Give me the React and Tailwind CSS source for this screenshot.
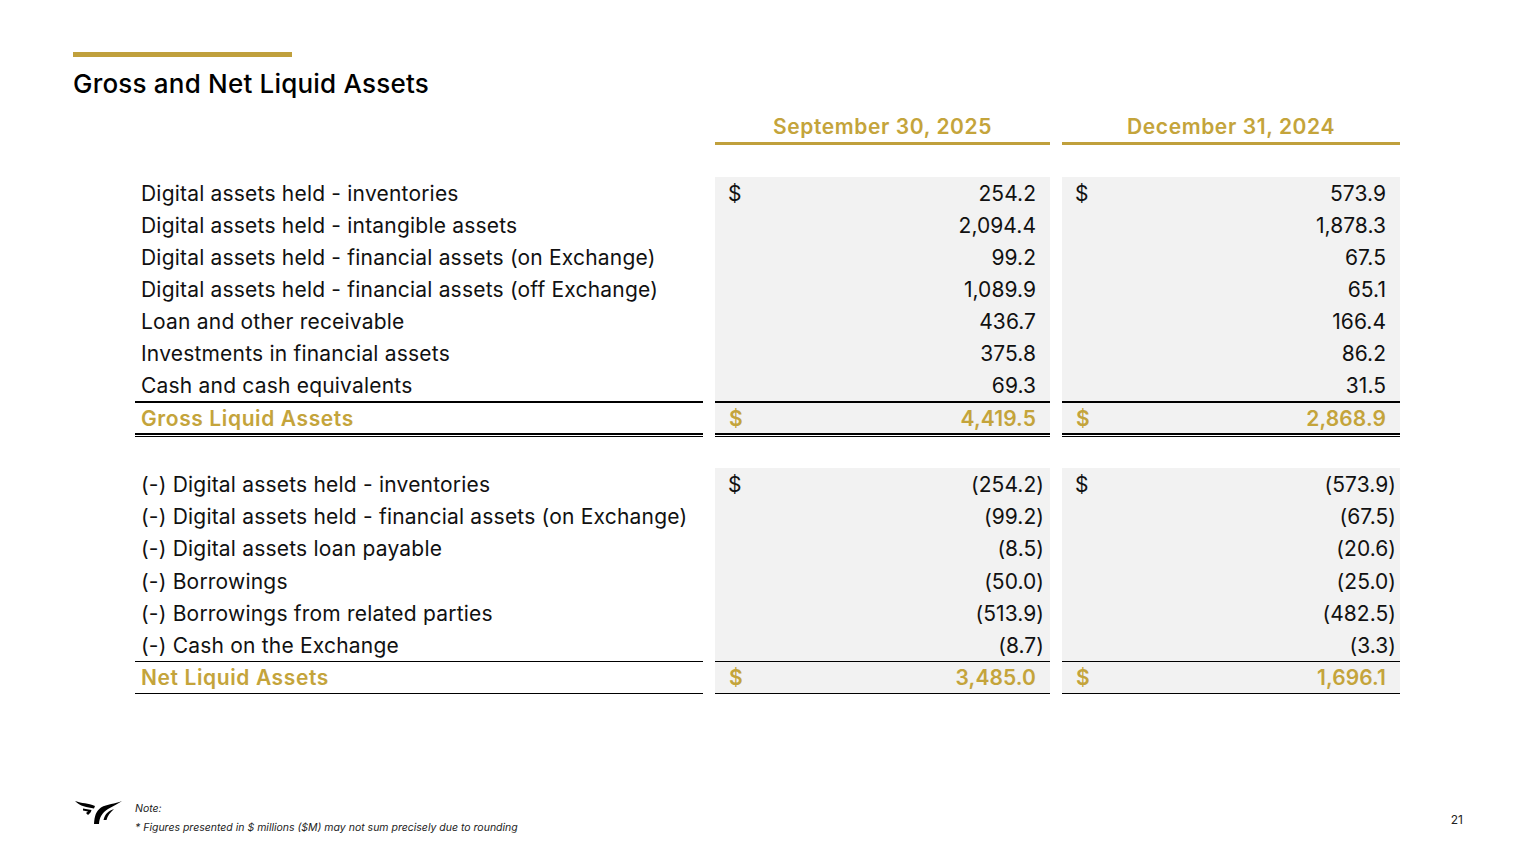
import React from 'react';

const gold = 'text-[#c4a43b]';

const grossRows = [
    ['Digital assets held - inventories', '$', '254.2', '$', '573.9'],
    ['Digital assets held - intangible assets', '', '2,094.4', '', '1,878.3'],
    ['Digital assets held - financial assets (on Exchange)', '', '99.2', '', '67.5'],
    ['Digital assets held - financial assets (off Exchange)', '', '1,089.9', '', '65.1'],
    ['Loan and other receivable', '', '436.7', '', '166.4'],
    ['Investments in financial assets', '', '375.8', '', '86.2'],
    ['Cash and cash equivalents', '', '69.3', '', '31.5'],
];

const netRows = [
    ['(-) Digital assets held - inventories', '$', '(254.2)', '$', '(573.9)'],
    ['(-) Digital assets held - financial assets (on Exchange)', '', '(99.2)', '', '(67.5)'],
    ['(-) Digital assets loan payable', '', '(8.5)', '', '(20.6)'],
    ['(-) Borrowings', '', '(50.0)', '', '(25.0)'],
    ['(-) Borrowings from related parties', '', '(513.9)', '', '(482.5)'],
    ['(-) Cash on the Exchange', '', '(8.7)', '', '(3.3)'],
];

const Row = ({ row, paren }) => (
    <div className={`grid grid-cols-[568px_335px_338px] gap-x-3 items-stretch ${paren ? 'h-[32.2px]' : 'h-8'}`}>
        <div className="pl-1.5 pt-px flex items-center whitespace-nowrap tracking-[0.2px]">{row[0]}</div>
        <div className={`bg-[#f2f2f2] pl-[13px] pt-px flex items-center justify-between tracking-[0.05px] ${paren ? 'pr-1.5' : 'pr-3.5'}`}>
            <span>{row[1]}</span>
            <span>{row[2]}</span>
        </div>
        <div className={`bg-[#f2f2f2] pl-[13px] pt-px flex items-center justify-between tracking-[0.05px] ${paren ? 'pr-1' : 'pr-3.5'}`}>
            <span>{row[3]}</span>
            <span>{row[4]}</span>
        </div>
    </div>
);

const TotalRow = ({ label, a, b, double }) => (
    <div className={`grid grid-cols-[568px_335px_338px] gap-x-3 font-semibold ${gold}`}>
        {[label, a, b].map((val, i) => (
            <div
                key={i}
                className={`flex items-center justify-between border-black ${i === 0 ? 'pl-1.5 tracking-[0.6px]' : 'bg-[#f2f2f2] px-3.5 tracking-[0.1px]'} ${double ? 'h-[34px] pt-0.5 border-y-2 shadow-[0_1px_0_#fff,0_2px_0_#000]' : 'h-[33px] border-y'}`}
            >
                {i > 0 && <span>$</span>}
                <span>{val}</span>
            </div>
        ))}
    </div>
);

const Logo = () => (
    <svg width="48" height="25" viewBox="0 0 48 25" fill="#000" className="mt-px shrink-0">
        <path d="M0 1C7 3.500 13 3 20 6L19 8.500C12 7 5 6.500 0 1Z" />
        <path d="M8 8.500L16.500 10C16 12 15 13.500 13 15L11 13L13 11.500L8 10.500Z" />
        <path d="M47 1C40 4 32 4 26 7.500C21 11 19.500 16 19 24H24C24.500 17 27 13 33 9C38 6 43 4 47 1Z" />
        <path d="M39 9C34 10.500 30 13.500 28.500 20L31.500 20C32.500 16 35 12.500 39 9Z" />
    </svg>
);

export default function App() {
    return (
        <div className="w-[1536px] h-[864px] bg-white text-[#111] flex flex-col overflow-hidden font-['Inter',sans-serif]">
            <div className="pt-[52px] pl-[73px]">
                <div className="w-[219px] h-[5px] bg-[#c0a03c]" />
                <h1 className="mt-[10px] text-[26px] leading-[34px] font-medium text-black tracking-[0.2px]">Gross and Net Liquid Assets</h1>
            </div>

            <div className="pl-[135px] text-[21px]">
                <div className="grid grid-cols-[568px_335px_338px] gap-x-3 mt-[10px] font-semibold tracking-[0.6px]">
                    <div />
                    <div className={`h-[34px] border-b-[3px] border-[#c0a03c] text-center ${gold}`}>September 30, 2025</div>
                    <div className={`h-[34px] border-b-[3px] border-[#c0a03c] text-center ${gold}`}>December 31, 2024</div>
                </div>

                <div className="mt-8">
                    {grossRows.map(row => <Row key={row[0]} row={row} />)}
                    <TotalRow label="Gross Liquid Assets" a="4,419.5" b="2,868.9" double />
                </div>

                <div className="mt-[33px]">
                    {netRows.map(row => <Row key={row[0]} row={row} paren />)}
                    <TotalRow label="Net Liquid Assets" a="3,485.0" b="1,696.1" />
                </div>
            </div>

            <div className="mt-auto pb-[27px] pl-[75px] pr-[73px] flex items-start">
                <Logo />
                <div className="ml-3 text-[10.5px] leading-[19px] italic text-[#222]">
                    <p>Note:</p>
                    <p>* Figures presented in $ millions ($M) may not sum precisely due to rounding</p>
                </div>
                <span className="ml-auto mt-[13px] text-xs text-[#222]">21</span>
            </div>
        </div>
    );
}
